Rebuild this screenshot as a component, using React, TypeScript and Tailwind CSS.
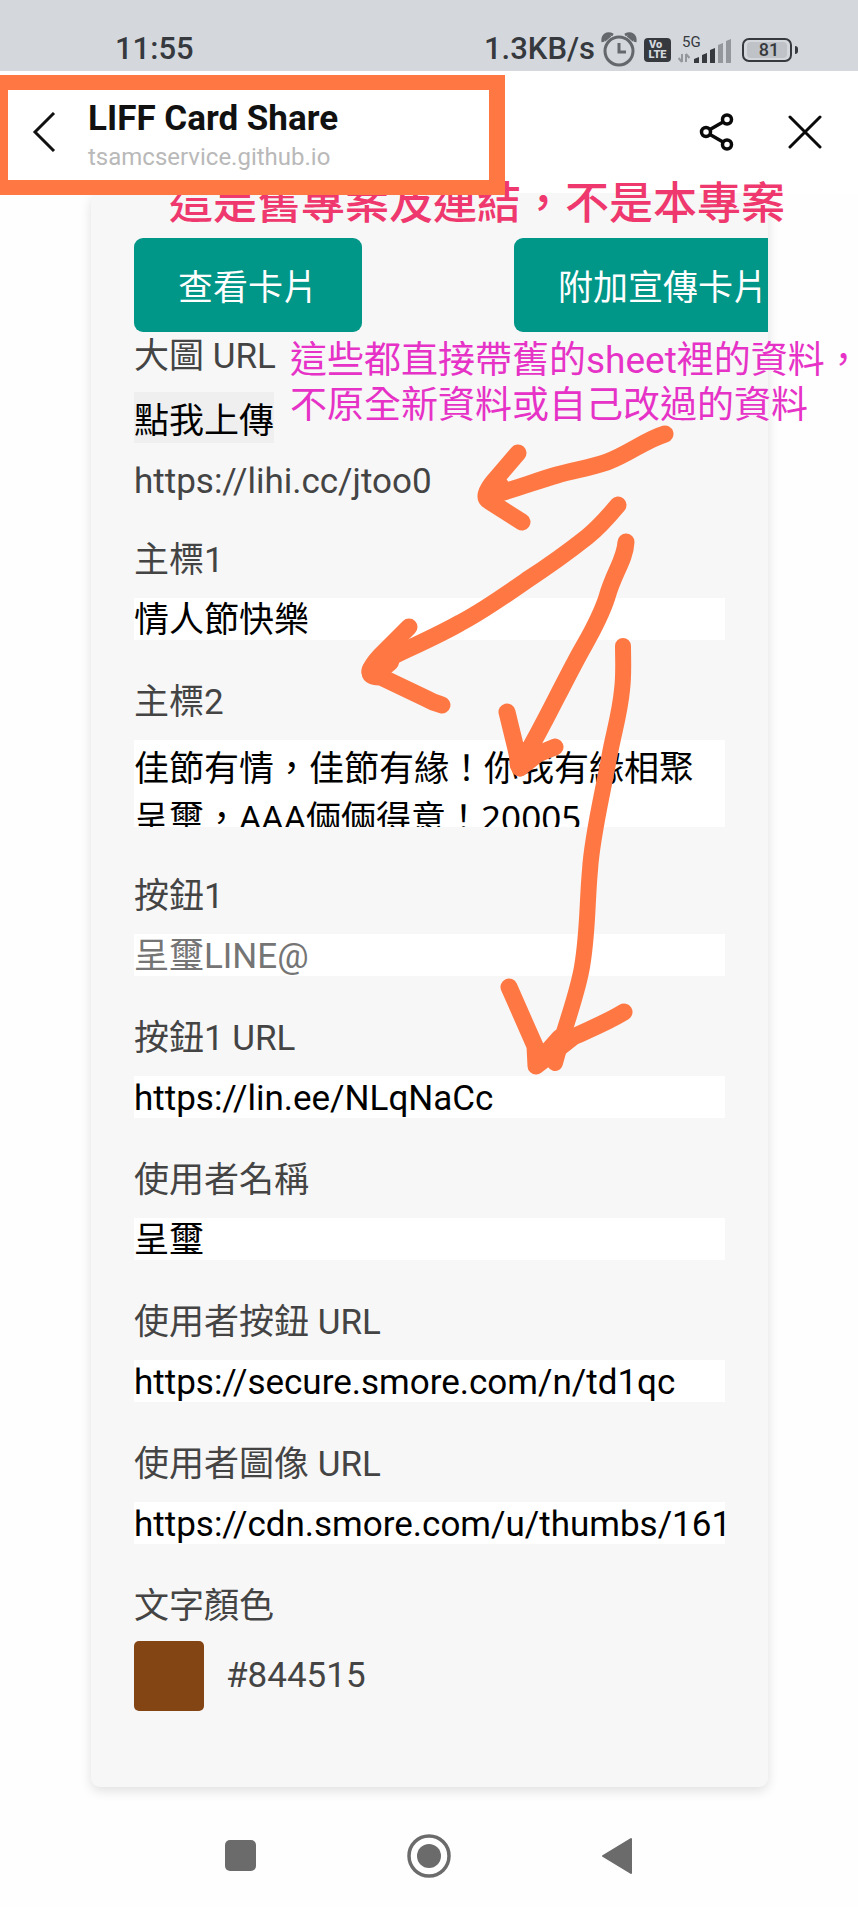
import React from "react";

const SANS = "font-['Roboto','Noto_Sans_CJK_TC',sans-serif]";

function StatusBar() {
  return (
    <div className="flex h-[71px] items-center justify-between bg-[#d4d8dd] pt-7 pr-[60px] pl-[115px] text-[31px] font-medium text-[#36393d]">
      <span>11:55</span>
      <div className="flex items-center">
        <span>1.3KB/s</span>
        <svg className="ml-1.5 h-9 w-9" viewBox="0 0 36 36" fill="none" stroke="#64676b">
          <circle cx="18" cy="19" r="14" strokeWidth="3" />
          <path d="M18 11v9h7" strokeWidth="3" />
          <path d="M2 10C1 3 6 0 12 3M34 10c1-7-4-10-10-7" strokeWidth="3" />
          <path d="M3 8 9 3M33 8l-6-5" strokeWidth="4" />
        </svg>
        <span className="ml-[7px] flex h-6 w-[27px] flex-col items-center justify-center rounded-[4px] bg-[#36393d] text-[11px] leading-[10px] font-black text-[#d4d8dd]">
          <span className="self-start pl-[5px]">Vo</span>
          <span>LTE</span>
        </span>
        <div className="relative ml-[7px] h-7 w-[54px]">
          <span className="absolute top-0 left-1 text-[15px] leading-[13px] font-normal">5G</span>
          <svg className="h-7 w-[54px]" viewBox="0 0 54 28">
            <path d="M4 18v8M4 26l-3.500-4M8 26v-8M8 18l3.500 4" stroke="#94979b" strokeWidth="2" fill="none" />
            <path d="M16 27v-4l5-2v6zM24 27v-8l5-2v10zM32 27V14l5-2v15z" fill="#36393d" />
            <path d="M40 27V9l5-2v20zM48 27V5l5-2v24z" fill="#94979b" />
          </svg>
        </div>
        <div className="relative ml-2.5 flex h-6 w-[50px] items-center justify-center rounded-[7px] border-2 border-[#36393d]">
          <span className="flex h-4 w-10 items-center justify-center rounded-sm bg-[#bfc2c6] pl-1 text-[18px] leading-4">81</span>
        </div>
        <span className="ml-[3px] h-2 w-[3px] rounded-r bg-[#36393d]" />
      </div>
    </div>
  );
}

function TitleBar() {
  return (
    <header className="relative flex h-[122px] items-center justify-between bg-white pr-[36px] pl-[32px]">
      <div className="flex items-center">
        <button aria-label="返回" className="h-10 w-6">
          <svg className="h-10 w-6" viewBox="0 0 24 40" fill="none" stroke="#111" strokeWidth="3">
            <path d="M22 1 3 20l19 19" />
          </svg>
        </button>
        <div className="ml-8 pt-2">
          <h1 className="text-[35px] leading-[42px] font-bold text-[#111]">LIFF Card Share</h1>
          <p className="text-[24px] leading-[34px] text-[#b9b9b9]">tsamcservice.github.io</p>
        </div>
      </div>
      <div className="flex items-center gap-[54px]">
        <button aria-label="分享" className="h-10 w-[36px]">
          <svg className="h-10 w-[36px]" viewBox="0 0 36 40" fill="none" stroke="#0a0a0a" strokeWidth="3.500">
            <circle cx="8" cy="20" r="4.500" />
            <circle cx="29" cy="7.500" r="4.500" />
            <circle cx="29" cy="32.500" r="4.500" />
            <path d="m12 17.500 13-7.500M12 22.500l13 7.500" />
          </svg>
        </button>
        <button aria-label="關閉" className="h-10 w-[34px]">
          <svg className="h-10 w-[34px]" viewBox="0 0 34 40" fill="none" stroke="#0a0a0a" strokeWidth="3" strokeLinecap="round">
            <path d="m2 5 30 30M32 5 2 35" />
          </svg>
        </button>
      </div>
      <div className="absolute top-1 left-0 z-20 h-[120px] w-[505px] border-y-[15px] border-r-[16px] border-l-8 border-[#ff7844]" />
    </header>
  );
}

type FieldProps = { id: string; label: string; value?: string; placeholder?: string };

function Field({ id, label, value, placeholder }: FieldProps) {
  return (
    <div className="mb-[38px]">
      <label htmlFor={id} className="block leading-[50px]">
        {label}
      </label>
      <input
        id={id}
        type="text"
        defaultValue={value}
        placeholder={placeholder}
        className="mt-3 block h-[42px] w-full bg-white pt-1 text-black outline-none placeholder:text-[#757575]"
      />
    </div>
  );
}

function CardForm() {
  return (
    <main className="mr-[90px] ml-[91px] overflow-hidden rounded-[9px] bg-[#f7f7f7] px-[43px] pt-[45px] pb-[76px] text-[35px] text-[#444] shadow-[0_4px_12px_rgba(0,0,0,0.12)]">
      <div className="flex gap-[152px] whitespace-nowrap text-white">
        <button className="h-[94px] shrink-0 rounded-[9px] bg-[#009688] px-11 pt-2">查看卡片</button>
        <button className="h-[94px] shrink-0 rounded-[9px] bg-[#009688] px-11 pt-2">附加宣傳卡片</button>
      </div>
      <div className="mb-[31px]">
        <p className="leading-[50px]">大圖 URL</p>
        <button className="mt-2.5 block h-[51px] bg-[#efefef] pt-1 text-black">點我上傳</button>
        <p className="mt-3.5 pt-0.5 leading-[46px]">https://lihi.cc/jtoo0</p>
      </div>
      <Field id="title1" label="主標1" value="情人節快樂" />
      <div className="mb-[45px]">
        <label htmlFor="title2" className="block leading-[50px]">
          主標2
        </label>
        <textarea
          id="title2"
          className="mt-3 block h-[87px] w-full resize-none overflow-hidden bg-white pt-[3px] font-['Noto_Sans','Noto_Sans_CJK_TC',sans-serif] leading-[50px] text-black outline-none"
          defaultValue={"佳節有情，佳節有緣！你我有緣相聚\n呈璽，AAA倆倆得意！20005"}
        />
      </div>
      <Field id="button1" label="按鈕1" placeholder="呈璽LINE@" />
      <Field id="button1-url" label="按鈕1 URL" value="https://lin.ee/NLqNaCc" />
      <Field id="user-name" label="使用者名稱" value="呈璽" />
      <Field id="user-url" label="使用者按鈕 URL" value="https://secure.smore.com/n/td1qc" />
      <Field id="user-image" label="使用者圖像 URL" value="https://cdn.smore.com/u/thumbs/161" />
      <label htmlFor="color" className="block leading-[50px]">
        文字顏色
      </label>
      <div className="mt-[9px] flex items-center gap-[22px]">
        <button id="color" aria-label="文字顏色" className="h-[70px] w-[70px] rounded-[5px] bg-[#844515]" />
        <span>#844515</span>
      </div>
    </main>
  );
}

function Notes() {
  return (
    <>
      <p className="absolute top-[174px] left-[169px] z-10 text-[44px] leading-[60px] whitespace-nowrap text-[#ee386e] font-medium">
        這是舊專案及連結，不是本專案
      </p>
      <p className="absolute top-[338px] left-[290px] z-10 text-[37px] leading-[45px] whitespace-nowrap text-[#e632c6]">
        這些都直接帶舊的sheet裡的資料，
        <br />
        不原全新資料或自己改過的資料
      </p>
      <svg
        className="pointer-events-none absolute top-0 left-0 z-10 h-[1100px] w-[858px]"
        viewBox="0 0 858 1100"
        fill="none"
        stroke="#ff7844"
        strokeWidth="17"
        strokeLinecap="round"
        strokeLinejoin="round"
      >
        <path d="M665 434C645 440 629 454 607 462C590 468 574 470 557 475C536 481 516 489 490 496" />
        <path d="M518 453 494 481C485 492 484 498 489 501L522 522" />
        <path d="M500 487 490 498" strokeWidth="20" />
        <path d="M618 505C608 517 598 528 587 537C568 552 547 567 527 580C504 596 483 611 460 623C439 635 416 645 393 656L374 672" />
        <path d="M409 627 380 656C366 671 367 678 381 677L425 698C432 702 438 704 442 705" />
        <path d="M387 660 374 671" strokeWidth="25" />
        <path d="M626 542C625 560 614 572 607 597C600 619 590 635 580 653C562 686 548 716 530 748L520 768" />
        <path d="M507 712 516 749 520 768 538 754 555 747" />
        <path d="M520 752v12" strokeWidth="21" />
        <path d="M623 646C623 661 624 675 622 690C620 712 614 732 610 753C602 797 592 836 590 870C587 902 588 932 582 967C577 996 566 1022 555 1063" strokeWidth="16" />
        <path d="m509 987 26 59 1 20 17-13 20-16c17-8 35-15 51-25" />
        <path d="m544 1056 16-18" strokeWidth="18" />
      </svg>
    </>
  );
}

function NavBar() {
  return (
    <nav className="flex h-[120px] items-center justify-between px-[219px] pt-[17px]">
      <button aria-label="最近使用" className="h-11 w-11">
        <svg className="h-11 w-11" viewBox="0 0 44 44">
          <rect x="6" y="6" width="31" height="31" rx="5" fill="#6b6b6b" />
        </svg>
      </button>
      <button aria-label="主畫面" className="h-11 w-11">
        <svg className="h-11 w-11" viewBox="0 0 44 44">
          <circle cx="22" cy="22" r="20" fill="none" stroke="#6b6b6b" strokeWidth="3.500" />
          <circle cx="22" cy="22" r="12" fill="#6b6b6b" />
        </svg>
      </button>
      <button aria-label="上一頁" className="h-11 w-11">
        <svg className="h-11 w-11" viewBox="0 0 44 44">
          <path d="M8 22 36 5v34z" fill="#6b6b6b" stroke="#6b6b6b" strokeWidth="2" strokeLinejoin="round" />
        </svg>
      </button>
    </nav>
  );
}

export default function App() {
  return (
    <div className={`relative min-h-screen overflow-hidden bg-[#fefefe] ${SANS}`}>
      <StatusBar />
      <TitleBar />
      <CardForm />
      <NavBar />
      <Notes />
    </div>
  );
}
